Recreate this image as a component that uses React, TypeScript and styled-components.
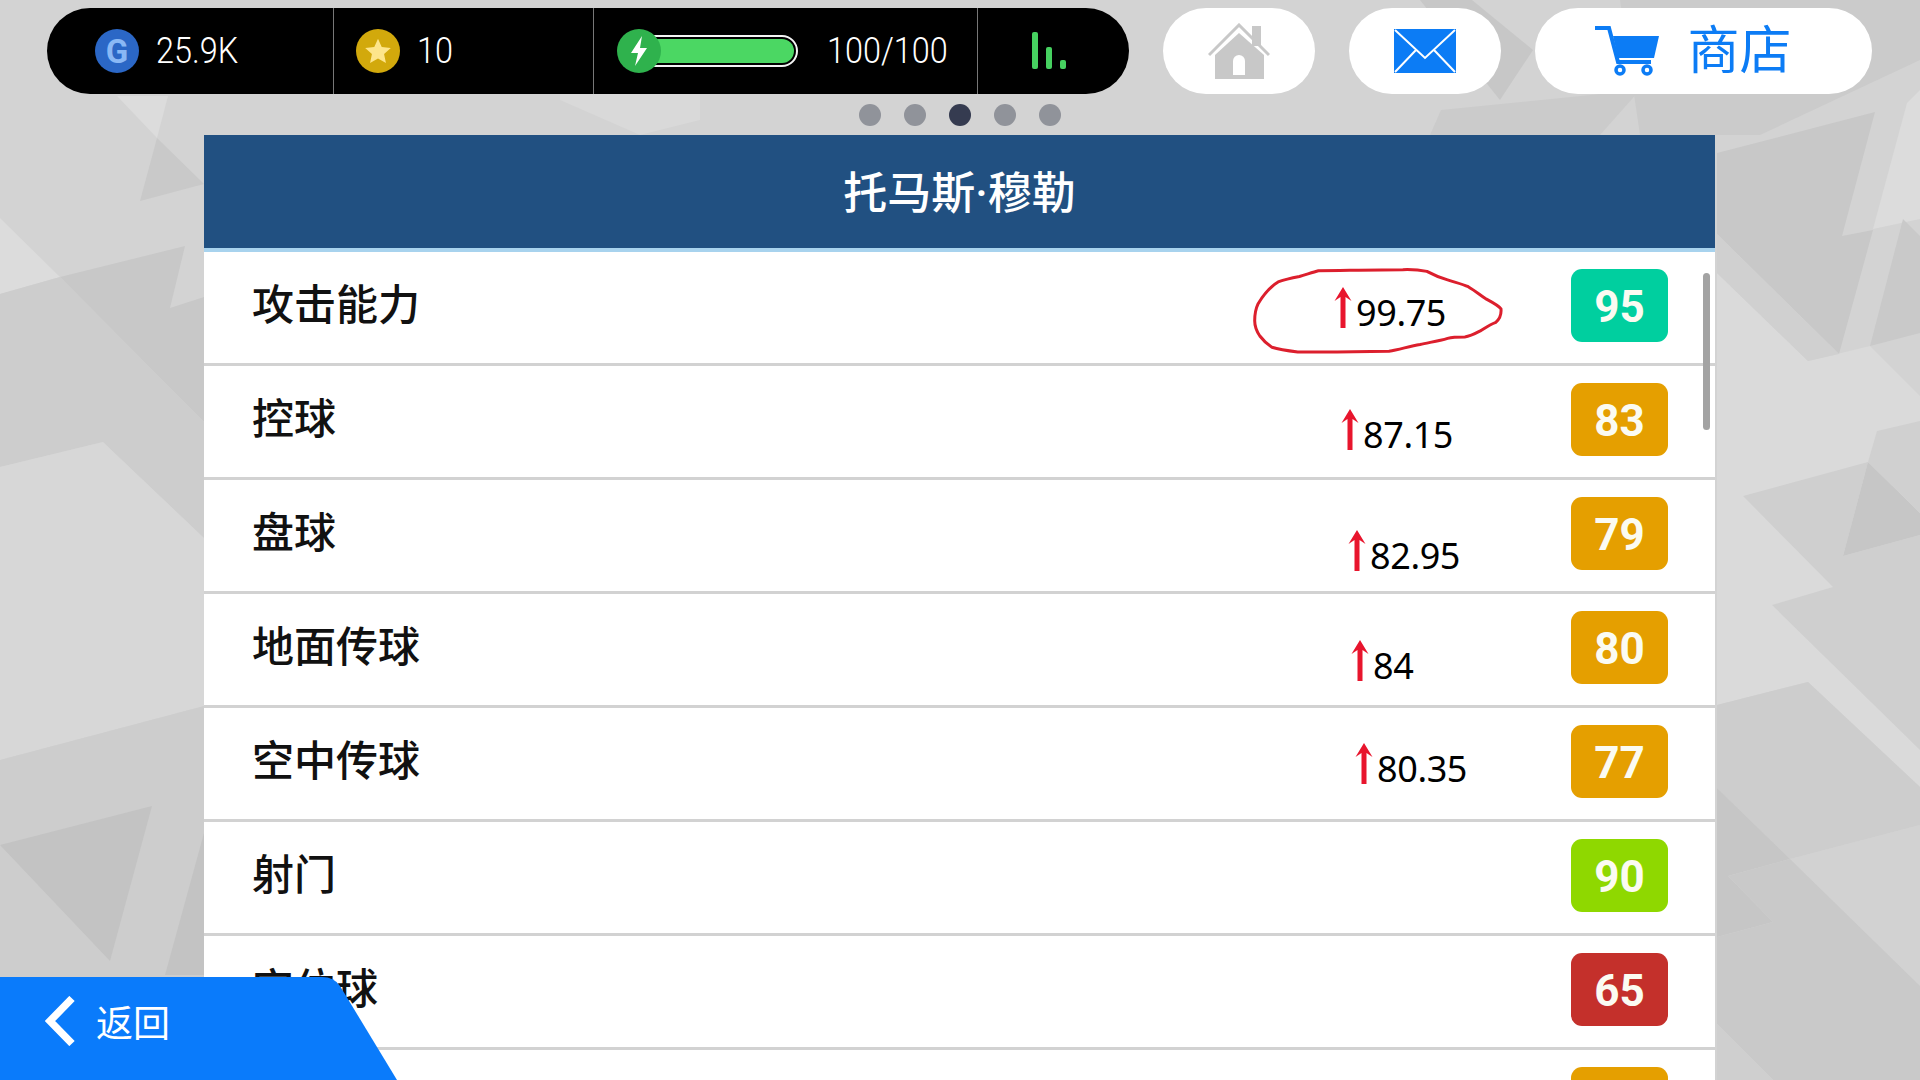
import React from "react";
import styled, { createGlobalStyle } from "styled-components";

const GlobalStyle = createGlobalStyle`
  html, body { margin: 0; padding: 0; overflow: hidden; background: #d2d2d2; }
  body { font-family: "Noto Sans CJK SC", "Noto Sans", sans-serif; }
`;

const Screen = styled.div`
  position: relative;
  width: 1920px;
  height: 1080px;
  overflow: hidden;
  display: flex;
  flex-direction: column;
  background: #d3d3d3;
`;

const Backdrop = styled.svg`
  position: absolute;
  inset: 0;
  width: 1920px;
  height: 1080px;
`;

const TopRow = styled.header`
  position: relative;
  display: flex;
  gap: 34px;
  height: 86px;
  padding: 8px 0 0 47px;
`;

const StatusPill = styled.div`
  display: flex;
  width: 1082px;
  height: 86px;
  background: #000;
  border-radius: 43px;
  overflow: hidden;
`;

const StatusCell = styled.div<{ $w: number; $pad: number; $gap: number; $last?: boolean }>`
  display: flex;
  align-items: center;
  box-sizing: border-box;
  width: ${(p) => p.$w}px;
  padding-left: ${(p) => p.$pad}px;
  gap: ${(p) => p.$gap}px;
  border-right: ${(p) => (p.$last ? "none" : "1.5px solid #777")};
`;

const CoinIcon = styled.span<{ $bg: string; $front?: boolean }>`
  display: flex;
  align-items: center;
  justify-content: center;
  flex: none;
  position: relative;
  z-index: ${(p) => (p.$front ? 1 : 0)};
  width: 44px;
  height: 44px;
  border-radius: 50%;
  background: ${(p) => p.$bg};
`;

const CoinLetter = styled.span`
  font-family: "Roboto", sans-serif;
  font-weight: 700;
  font-size: 33px;
  line-height: 1;
  color: #8ab8f5;
`;

const StatText = styled.span`
  display: inline-block;
  font-family: "Roboto", sans-serif;
  font-weight: 300;
  font-size: 36px;
  line-height: 1;
  color: #fff;
  white-space: nowrap;
  transform: scaleX(0.9);
  transform-origin: left center;
`;

const EnergyTrack = styled.span`
  display: block;
  flex: none;
  box-sizing: border-box;
  width: 158px;
  height: 32px;
  margin-left: -50px;
  padding: 2px;
  border: 2px solid #f4f4f4;
  border-radius: 0 16px 16px 0;
  background: #000;
`;

const EnergyFill = styled.span`
  display: block;
  height: 100%;
  background: #4bd763;
  border-radius: 0 12px 12px 0;
`;

const NavButton = styled.button<{ $w: number; $inset?: number }>`
  display: flex;
  align-items: center;
  justify-content: center;
  gap: 28px;
  flex: none;
  box-sizing: border-box;
  width: ${(p) => p.$w}px;
  height: 86px;
  padding: 0 ${(p) => p.$inset ?? 0}px 0 0;
  border: none;
  background: #fff;
  border-radius: 43px;
  color: #0c7cf5;
  font-family: "Noto Sans CJK SC", sans-serif;
  font-size: 52px;
  line-height: 1;
`;

const ShopLabel = styled.span`
  margin-bottom: 8px;
`;

const Dots = styled.div`
  position: relative;
  display: flex;
  justify-content: center;
  gap: 23px;
  padding: 10px 0 9px;
`;

const Dot = styled.span<{ $active?: boolean }>`
  width: 22px;
  height: 22px;
  border-radius: 50%;
  background: ${(p) => (p.$active ? "#353b50" : "#90939a")};
`;

const Panel = styled.main`
  position: relative;
  width: 1511px;
  margin-left: 204px;
  flex: 1;
  min-height: 0;
  overflow: hidden;
  background: #fff;
`;

const PanelHeader = styled.div`
  display: flex;
  align-items: center;
  justify-content: center;
  box-sizing: border-box;
  height: 117px;
  padding-top: 5px;
  background: #215081;
  border-bottom: 4px solid #a8d3ee;
  color: #fff;
  font-family: "Roboto", "Noto Sans CJK SC", sans-serif;
  font-size: 44px;
  font-weight: 500;
  line-height: 1;
`;

const Row = styled.div`
  position: relative;
  display: flex;
  align-items: center;
  justify-content: space-between;
  box-sizing: border-box;
  height: 114px;
  padding: 0 47px 4px 48px;
  border-bottom: 3px solid #d2d2d2;
`;

const Label = styled.span`
  margin-bottom: 8px;
  font-size: 42px;
  font-weight: 500;
  line-height: 1;
  color: #111;
`;

const Badge = styled.span<{ $bg: string }>`
  display: flex;
  align-items: center;
  justify-content: center;
  width: 97px;
  height: 73px;
  border-radius: 11px;
  background: ${(p) => p.$bg};
  color: #fbfbf2;
  font-family: "Roboto", sans-serif;
  font-size: 44px;
  font-weight: 700;
  line-height: 1;
  padding-top: 2px;
  box-sizing: border-box;
`;

const Note = styled.span<{ $x: number; $y: number }>`
  position: absolute;
  left: ${(p) => p.$x}px;
  top: ${(p) => p.$y}px;
  display: flex;
  align-items: flex-end;
  gap: 4px;
`;

const NoteText = styled.span`
  font-family: "Noto Sans", sans-serif;
  font-size: 36px;
  line-height: 1;
  color: #000;
  letter-spacing: -0.4px;
  margin-bottom: -3px;
`;

const Scribble = styled.svg`
  position: absolute;
  left: 1050px;
  top: 17px;
  width: 248px;
  height: 84px;
  overflow: visible;
`;

const ScrollThumb = styled.span`
  position: absolute;
  top: 138px;
  right: 5px;
  width: 7px;
  height: 157px;
  border-radius: 4px;
  background: #a3a3a3;
`;

const BackButton = styled.button`
  position: absolute;
  left: 0;
  bottom: 0;
  display: flex;
  align-items: center;
  gap: 21px;
  box-sizing: border-box;
  width: 400px;
  height: 103px;
  padding: 0 0 15px 45px;
  border: none;
  background: #0a7bfb;
  color: #fff;
  font-family: "Noto Sans CJK SC", sans-serif;
  font-size: 37px;
  line-height: 1;
  clip-path: path("M0 0H322Q334 0 340 9L397 103H0Z");
`;

const shapes: [string, string][] = [
  ["#dcdcdc", "0,218 60,277 0,294"],
  ["#c8c8c8", "60,277 185,246 170,308 204,297 204,422"],
  ["#cdcdcd", "0,294 60,277 204,422 204,538 103,442 0,467"],
  ["#d7d7d7", "0,467 103,442 204,538 204,706 0,760"],
  ["#cdcdcd", "0,760 204,706 204,1080 0,1080"],
  ["#c3c3c3", "0,845 152,806 110,961"],
  ["#c3c3c3", "204,833 165,975 204,975"],
  ["#c9c9c9", "157,138 204,184 140,201"],
  ["#dcdcdc", "117,96 168,96 157,138"],
  ["#d9d9d9", "560,100 640,135 700,120 700,94 560,94"],
  ["#cbcbcb", "1441,110 1640,90 1600,135 1430,135"],
  ["#c7c7c7", "1472,0 1533,50 1500,100 1420,0"],
  ["#cbcbcb", "1620,0 1920,0 1920,60 1760,135 1640,135"],
  ["#dadada", "1717,273 1808,361 1870,346 1920,396 1920,787 1808,682 1717,705"],
  ["#cfcfcf", "1743,496 1868,462 1843,556 1920,535 1920,750 1772,605 1833,587"],
  ["#c6c6c6", "1868,462 1920,513 1920,535 1843,556"],
  ["#d0d0d0", "1877,431 1920,421 1920,513 1868,462"],
  ["#c8c8c8", "1717,153 1875,112 1842,236 1873,230 1839,354 1717,234"],
  ["#d0d0d0", "1717,234 1839,354 1808,361 1717,273"],
  ["#dcdcdc", "1907,103 1920,90 1920,219 1873,229"],
  ["#c9c9c9", "1903,219 1920,236 1920,333 1870,346"],
  ["#cdcdcd", "1717,705 1808,682 1920,787 1920,825 1790,859 1717,788"],
  ["#c6c6c6", "1717,788 1790,859 1728,876 1773,922 1717,937"],
  ["#d2d2d2", "1790,859 1920,825 1920,986"],
  ["#c9c9c9", "1717,937 1773,922 1728,876 1790,859 1920,986 1920,1080 1773,1080 1717,1024"],
  ["#cfcfcf", "1717,1024 1773,1080 1717,1080"],
];

type RowData = {
  id: string;
  label?: string;
  score?: number;
  color: string;
  note?: { value: string; x: number; y: number };
};

const GREEN = "#00cf9f";
const AMBER = "#e59f00";

const rows: RowData[] = [
  { id: "attack", label: "攻击能力", score: 95, color: GREEN, note: { value: "99.75", x: 1130, y: 35 } },
  { id: "control", label: "控球", score: 83, color: AMBER, note: { value: "87.15", x: 1137, y: 43 } },
  { id: "dribble", label: "盘球", score: 79, color: AMBER, note: { value: "82.95", x: 1144, y: 50 } },
  { id: "ground", label: "地面传球", score: 80, color: AMBER, note: { value: "84", x: 1147, y: 46 } },
  { id: "air", label: "空中传球", score: 77, color: AMBER, note: { value: "80.35", x: 1151, y: 35 } },
  { id: "shot", label: "射门", score: 90, color: "#8fd800" },
  { id: "setpiece", label: "定位球", score: 65, color: "#c4302b" },
  { id: "next", color: AMBER },
];

const UpArrow = () => (
  <svg width="18" height="41" viewBox="0 0 18 41" fill="#e8152d" style={{ flex: "none" }}>
    <path d="M9 0 17.500 14 11.500 10V41H6.500V10L.5 14Z" />
  </svg>
);

const HomeIcon = () => (
  <svg width="62" height="56" viewBox="0 0 62 56">
    <path d="M44 3h9v20h-9z" fill="#c8c8c8" />
    <path d="M1 32 31 2l30 30" fill="none" stroke="#c8c8c8" strokeWidth="3" />
    <path d="M31 10 56 32v24H7V32Z" fill="#c8c8c8" />
    <path d="M25 52V38a6 6 0 0 1 12 0v14Z" fill="#fff" />
  </svg>
);

const MailIcon = () => (
  <svg width="62" height="44" viewBox="0 0 62 44">
    <rect width="62" height="44" fill="#0c7cf5" />
    <path d="M1 1 31 29 61 1M1 43 22 21M61 43 40 21" fill="none" stroke="#fff" strokeWidth="2" />
  </svg>
);

const CartIcon = () => (
  <svg width="64" height="50" viewBox="0 0 64 50">
    <path d="M0 2h14l9 34h33" fill="none" stroke="#0c7cf5" strokeWidth="4" />
    <path d="M18 10h46l-5 22H23Z" fill="#0c7cf5" />
    <circle cx="25" cy="44" r="4" fill="#fff" stroke="#0c7cf5" strokeWidth="3.500" />
    <circle cx="52" cy="44" r="4" fill="#fff" stroke="#0c7cf5" strokeWidth="3.500" />
  </svg>
);

const App = () => (
  <Screen>
    <GlobalStyle />
    <Backdrop viewBox="0 0 1920 1080">
      {shapes.map(([fill, points], i) => (
        <polygon key={i} fill={fill} points={points} />
      ))}
    </Backdrop>

    <TopRow>
      <StatusPill>
        <StatusCell $w={287} $pad={48} $gap={17}>
          <CoinIcon $bg="#2b67c6">
            <CoinLetter>G</CoinLetter>
          </CoinIcon>
          <StatText>25.9K</StatText>
        </StatusCell>
        <StatusCell $w={260} $pad={22} $gap={17}>
          <CoinIcon $bg="#d2a90c">
            <svg width="28" height="28" viewBox="0 0 24 24" fill="#fde58b">
              <path d="M12 1.500 15.200 8.600 23 9.400 17.200 14.600 18.800 22.300 12 18.400 5.200 22.300 6.800 14.600 1 9.400 8.800 8.600Z" />
            </svg>
          </CoinIcon>
          <StatText>10</StatText>
        </StatusCell>
        <StatusCell $w={384} $pad={23} $gap={29}>
          <CoinIcon $bg="#2fb24d" $front>
            <svg width="20" height="30" viewBox="0 0 20 30" fill="#fff">
              <path d="M13 0 2 17h7L6 30l12-18h-7Z" />
            </svg>
          </CoinIcon>
          <EnergyTrack>
            <EnergyFill />
          </EnergyTrack>
          <StatText>100/100</StatText>
        </StatusCell>
        <StatusCell $w={151} $pad={54} $gap={0} $last>
          <svg width="36" height="38" viewBox="0 0 36 38" fill="#46d160">
            <rect x="0" y="0" width="6" height="37" rx="2" />
            <rect x="14" y="15" width="6" height="22" rx="2" />
            <rect x="28" y="28" width="6" height="9" rx="2" />
          </svg>
        </StatusCell>
      </StatusPill>
      <NavButton $w={152} aria-label="主页">
        <HomeIcon />
      </NavButton>
      <NavButton $w={152} aria-label="邮件">
        <MailIcon />
      </NavButton>
      <NavButton $w={337} $inset={20}>
        <CartIcon />
        <ShopLabel>商店</ShopLabel>
      </NavButton>
    </TopRow>

    <Dots>
      <Dot />
      <Dot />
      <Dot $active />
      <Dot />
      <Dot />
    </Dots>

    <Panel>
      <PanelHeader>托马斯·穆勒</PanelHeader>
      {rows.map((r, i) => (
        <Row key={r.id}>
          <Label>{r.label}</Label>
          {r.note && (
            <Note $x={r.note.x} $y={r.note.y}>
              <UpArrow />
              <NoteText>{r.note.value}</NoteText>
            </Note>
          )}
          {i === 0 && (
            <Scribble viewBox="158 88 720 247" preserveAspectRatio="none">
              <path
                d="M345 93C430 92 520 90 590 90C620 89 645 92 660 95C680 106 700 114 720 120C745 128 765 133 780 140C800 152 815 165 830 175C850 186 868 195 875 205C877 225 868 238 860 245C842 252 828 262 815 270C800 278 785 286 770 288C752 288 735 288 720 292C695 300 665 304 640 310C610 315 580 325 550 330C460 332 370 333 285 332C255 328 230 324 210 318C195 308 183 296 175 285C165 270 160 255 160 240C160 220 163 205 170 190C185 165 205 140 230 125C250 118 270 114 290 110C310 104 330 97 345 93Z"
                fill="none"
                stroke="#dc1f2d"
                strokeWidth="3"
                vectorEffect="non-scaling-stroke"
              />
            </Scribble>
          )}
          <Badge $bg={r.color}>{r.score}</Badge>
        </Row>
      ))}
      <ScrollThumb />
    </Panel>

    <BackButton>
      <svg width="30" height="50" viewBox="0 0 30 50" fill="none" stroke="#fff" strokeWidth="7.500">
        <path d="M27 2.500 5 25l22 22.500" />
      </svg>
      返回
    </BackButton>
  </Screen>
);

export default App;
